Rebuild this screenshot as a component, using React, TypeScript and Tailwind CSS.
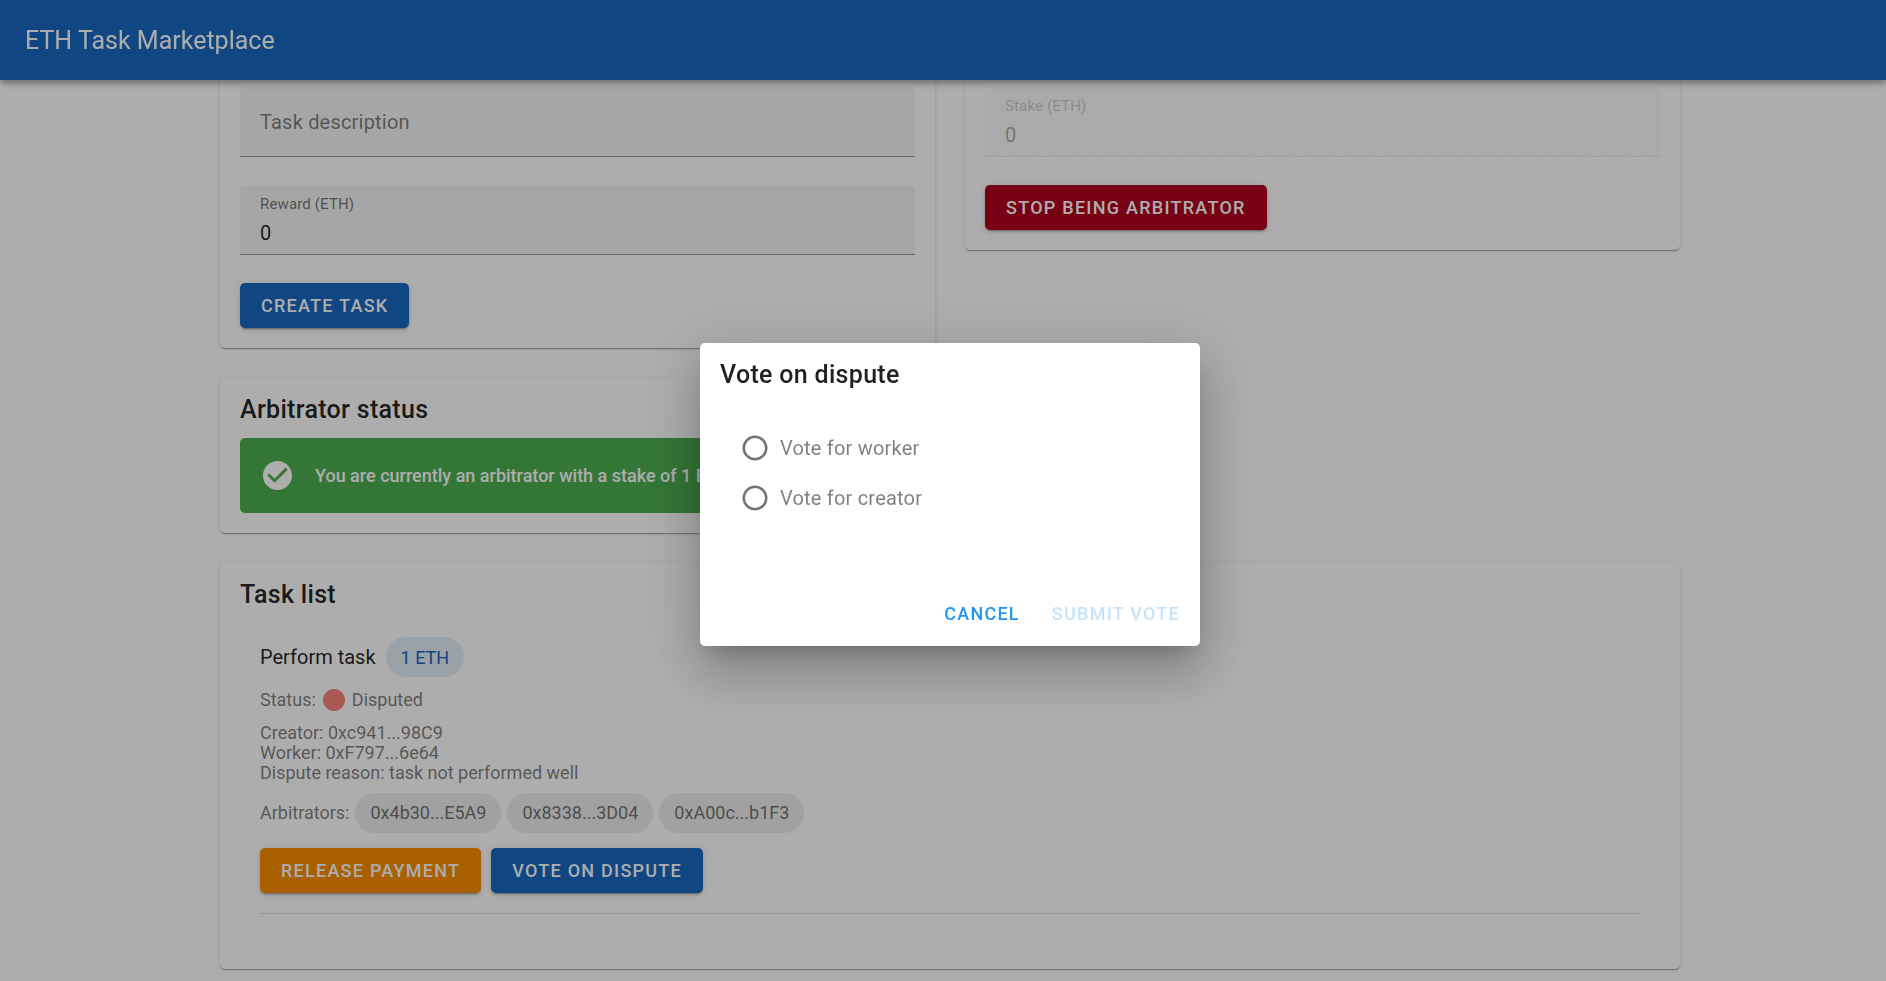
import { useState, type ReactNode } from "react";

const cardShadow =
  "shadow-[0_2px_1px_-1px_rgba(0,0,0,0.2),0_1px_1px_0_rgba(0,0,0,0.14),0_1px_4px_0_rgba(0,0,0,0.12)]";

function Card({ className = "", children }: { className?: string; children: ReactNode }) {
  return <section className={`bg-white ${cardShadow} ${className}`}>{children}</section>;
}

function CardTitle({ id, children }: { id?: string; children: ReactNode }) {
  return (
    <h2 id={id} className="px-5 pt-3 pb-2 text-[25px] leading-10 font-medium tracking-[0.0125em]">
      {children}
    </h2>
  );
}

function RaisedButton({ className, children }: { className: string; children: ReactNode }) {
  return (
    <button
      type="button"
      className={`h-[45px] rounded-[5px] px-[21px] text-[18px] font-medium tracking-[0.07em] text-white uppercase shadow-[0_4px_1px_-3px_rgba(0,0,0,0.2),0_2px_2px_0_rgba(0,0,0,0.14),0_1px_6px_0_rgba(0,0,0,0.12)] ${className}`}
    >
      {children}
    </button>
  );
}

function NumberField({ id, label, disabled = false }: { id: string; label: string; disabled?: boolean }) {
  return (
    <div
      className={`flex h-[70px] flex-col rounded-t-[5px] border-b bg-black/4 px-5 pt-2 ${
        disabled ? "border-dashed border-black/25 opacity-38" : "border-black/38"
      }`}
    >
      <label htmlFor={id} className="text-[15px] leading-[22px] tracking-[0.01em] text-black/55">
        {label}
      </label>
      <input
        id={id}
        type="text"
        inputMode="decimal"
        defaultValue="0"
        disabled={disabled}
        className="mt-1.5 w-full bg-transparent text-[20px] leading-6 text-black/87 outline-none"
      />
    </div>
  );
}

function Chip({ className, children }: { className: string; children: ReactNode }) {
  return (
    <span className={`inline-flex h-10 items-center rounded-full px-[15px] text-[18px] ${className}`}>
      {children}
    </span>
  );
}

function VoteOption({
  value,
  label,
  selected,
  onSelect,
}: {
  value: string;
  label: string;
  selected: string | null;
  onSelect: (value: string) => void;
}) {
  return (
    <label className="flex h-[50px] items-center text-[20px] tracking-[0.01em] text-black/50">
      <span className="relative mr-2.5 flex size-[30px] text-black/55">
        <input
          type="radio"
          name="vote"
          value={value}
          checked={selected === value}
          onChange={() => onSelect(value)}
          className="size-full appearance-none rounded-full outline-none"
        />
        <svg viewBox="0 0 24 24" className="pointer-events-none absolute inset-0 size-full" aria-hidden="true">
          <path
            fill="currentColor"
            d="M12 20a8 8 0 0 1-8-8 8 8 0 0 1 8-8 8 8 0 0 1 8 8 8 8 0 0 1-8 8m0-18A10 10 0 0 0 2 12a10 10 0 0 0 10 10 10 10 0 0 0 10-10A10 10 0 0 0 12 2z"
          />
          {selected === value && <circle cx="12" cy="12" r="5" fill="currentColor" />}
        </svg>
      </span>
      {label}
    </label>
  );
}

const arbitrators = ["0x4b30...E5A9", "0x8338...3D04", "0xA00c...b1F3"];

export default function App() {
  const [vote, setVote] = useState<string | null>(null);

  return (
    <div className="min-h-screen bg-white font-['Roboto',sans-serif] text-black/87">
      <header className="fixed inset-x-0 top-0 z-10 flex h-20 items-center bg-[#1867c0] px-[25px] pt-0.5 text-white shadow-[0_3px_5px_-1px_rgba(0,0,0,0.2),0_5px_6px_0_rgba(0,0,0,0.14),0_1px_13px_0_rgba(0,0,0,0.12)]">
        <h1 className="text-[25px] leading-10 font-normal">ETH Task Marketplace</h1>
      </header>

      <main className="mx-auto max-w-[1474px] pt-20 pb-3 pl-3.5">
        <div className="grid grid-cols-2 items-start gap-[30px]">
          <div className="flex flex-col gap-[30px]">
            <Card className="rounded-b-[5px] px-5 pt-[7px] pb-5">
              <form className="flex flex-col items-start gap-7">
                <input
                  type="text"
                  aria-label="Task description"
                  placeholder="Task description"
                  className="h-[70px] w-full rounded-t-[5px] border-b border-black/38 bg-black/4 px-5 text-[20px] tracking-[0.01em] outline-none placeholder:text-black/50"
                />
                <div className="w-full">
                  <NumberField id="reward" label="Reward (ETH)" />
                </div>
                <RaisedButton className="bg-[#1867c0]">Create task</RaisedButton>
              </form>
            </Card>
            <Card className="rounded-[5px] pb-5">
              <CardTitle>Arbitrator status</CardTitle>
              <div
                role="status"
                className="mx-5 flex h-[75px] items-center gap-5 rounded-[5px] bg-[#4caf50] px-5 text-white"
              >
                <svg viewBox="0 0 24 24" className="size-[35px] shrink-0" aria-hidden="true">
                  <path
                    fill="currentColor"
                    d="M12 2C6.5 2 2 6.5 2 12s4.500 10 10 10 10-4.500 10-10S17.500 2 12 2m-2 15-5-5 1.410-1.410L10 14.170l7.590-7.590L19 8l-9 9z"
                  />
                </svg>
                <p className="text-[18px] font-medium">
                  You are currently an arbitrator with a stake of 1 ETH
                </p>
              </div>
            </Card>
          </div>

          <Card className="rounded-b-[5px] px-5 pt-[7px] pb-5">
            <form className="flex flex-col items-start gap-7">
              <div className="w-full">
                <NumberField id="stake" label="Stake (ETH)" disabled />
              </div>
              <RaisedButton className="bg-[#b00020]">Stop being arbitrator</RaisedButton>
            </form>
          </Card>
        </div>

        <Card className="mt-[30px] rounded-[5px] pb-[55px]">
          <CardTitle>Task list</CardTitle>
          <article className="mx-10 border-b border-black/12 pt-3.5 pb-5">
            <div className="flex items-center gap-2.5">
              <h3 className="text-[20px]">Perform task</h3>
              <Chip className="bg-[#1867c0]/12 text-[#1867c0]">1 ETH</Chip>
            </div>
            <div className="text-[18px] leading-5 text-black/52">
              <p className="mt-3 flex h-[22px] items-center">
                Status:
                <span className="mx-[7px] size-[22px] rounded-full bg-[#f88379]" />
                Disputed
              </p>
              <p className="mt-3">Creator: 0xc941...98C9</p>
              <p>Worker: 0xF797...6e64</p>
              <p>Dispute reason: task not performed well</p>
              <div className="mt-2.5 flex items-center gap-1.5">
                <span>Arbitrators:</span>
                {arbitrators.map((address) => (
                  <Chip key={address} className="bg-black/7 text-black/55">
                    {address}
                  </Chip>
                ))}
              </div>
            </div>
            <div className="mt-[15px] flex gap-2.5">
              <RaisedButton className="bg-[#fb8c00]">Release payment</RaisedButton>
              <RaisedButton className="bg-[#1867c0]">Vote on dispute</RaisedButton>
            </div>
          </article>
        </Card>
      </main>

      <div className="fixed inset-0 z-20 flex items-center justify-center bg-black/32 pt-2 pl-3.5">
        <div
          role="dialog"
          aria-modal="true"
          aria-labelledby="vote-title"
          className="flex w-full max-w-[500px] flex-col rounded-[5px] bg-white shadow-[0_14px_19px_-9px_rgba(0,0,0,0.2),0_30px_48px_4px_rgba(0,0,0,0.14),0_11px_58px_10px_rgba(0,0,0,0.12)]"
        >
          <CardTitle id="vote-title">Vote on dispute</CardTitle>
          <div role="radiogroup" aria-labelledby="vote-title" className="px-10 pt-5 pb-[58px]">
            <VoteOption value="worker" label="Vote for worker" selected={vote} onSelect={setVote} />
            <VoteOption value="creator" label="Vote for creator" selected={vote} onSelect={setVote} />
          </div>
          <div className="flex h-[65px] items-center justify-end gap-3 px-2.5 text-[18px] font-medium tracking-[0.07em] text-[#2196f3]">
            <button type="button" className="h-[45px] rounded-[5px] px-2.5 uppercase">
              Cancel
            </button>
            <button
              type="button"
              disabled={vote === null}
              className="h-[45px] rounded-[5px] px-2.5 uppercase disabled:opacity-26"
            >
              Submit vote
            </button>
          </div>
        </div>
      </div>
    </div>
  );
}
